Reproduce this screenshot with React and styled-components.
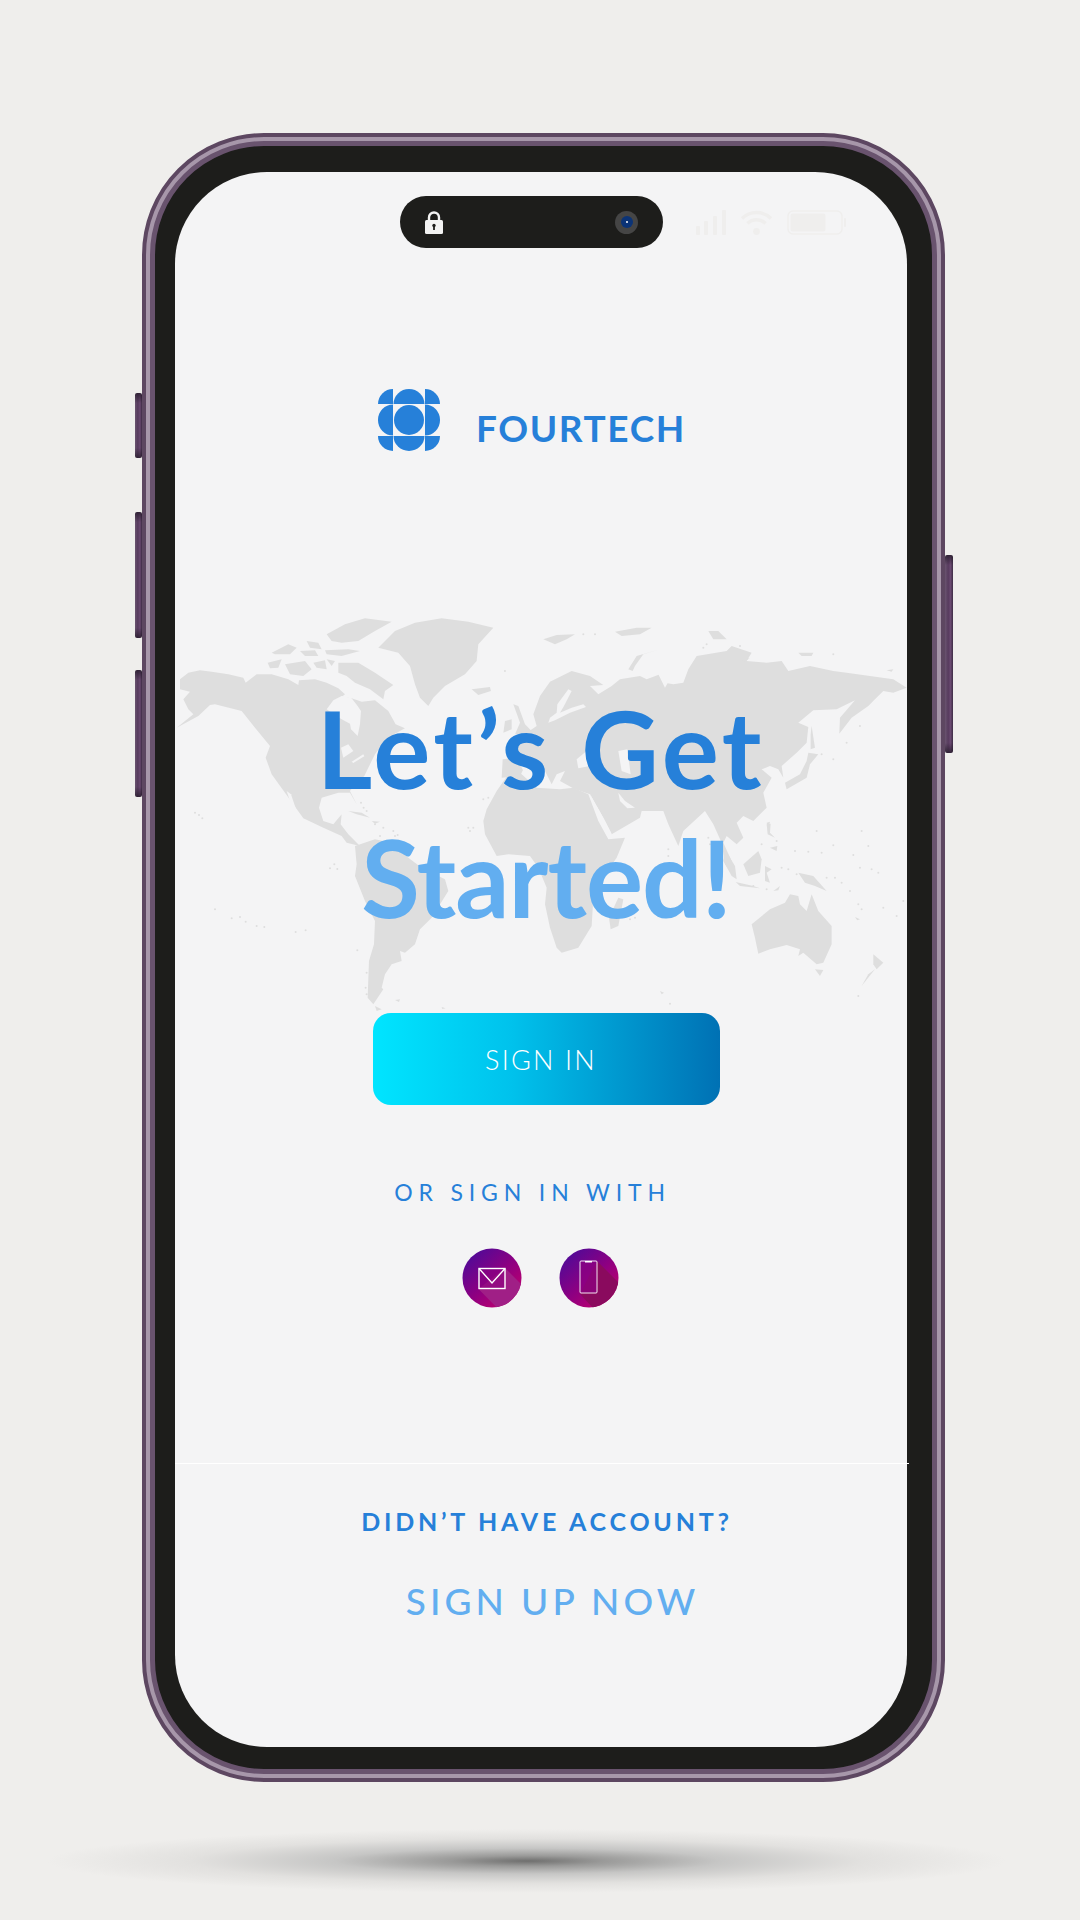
import React from "react";
import styled, { createGlobalStyle } from "styled-components";

const GlobalStyle = createGlobalStyle`
  html, body {
    margin: 0;
    padding: 0;
    width: 1080px;
    height: 1920px;
    overflow: hidden;
    background: #efeeec;
    font-family: "Lato", "Liberation Sans", sans-serif;
  }
`;

const Page = styled.div`
  width: 1080px;
  height: 1920px;
  display: flex;
  flex-direction: column;
  padding-top: 133px;
  box-sizing: border-box;
  background: #efeeec;
`;

const PhoneRow = styled.div`
  display: flex;
  padding-left: 135px;
`;

const LeftRail = styled.div`
  width: 7px;
  padding-top: 260px;
  display: flex;
  flex-direction: column;
`;

const RightRail = styled.div`
  width: 8px;
  padding-top: 422px;
`;

const SideButton = styled.div`
  width: 100%;
  height: ${(p) => p.$h}px;
  margin-bottom: ${(p) => p.$gap || 0}px;
  border-radius: 2px;
  background:
    linear-gradient(180deg, rgba(35, 25, 40, 0.75) 0, rgba(35, 25, 40, 0) 10px, rgba(35, 25, 40, 0) calc(100% - 10px), rgba(35, 25, 40, 0.75) 100%),
    linear-gradient(90deg, #6a5470 0%, #573b5e 40%, #6b4a72 70%, #3d2c44 100%);
`;

const FrameOuter = styled.div`
  width: 803px;
  height: 1649px;
  box-sizing: border-box;
  border: 4px solid #5d4761;
  border-radius: 122px;
  background: #a797aa;
  padding: 4px;
`;

const FrameInner = styled.div`
  height: 100%;
  box-sizing: border-box;
  border: 5px solid #69536e;
  border-radius: 114px;
  background: #1d1d1b;
  padding: 26px 25px 22px 20px;
`;

const Screen = styled.div`
  position: relative;
  height: 100%;
  border-radius: 92px;
  background: #f4f4f5;
  display: flex;
  flex-direction: column;
  align-items: center;
`;

const StatusBar = styled.div`
  align-self: stretch;
  margin-top: 24px;
  height: 52px;
  padding-left: 225px;
  display: flex;
  align-items: center;
`;

const Notch = styled.div`
  width: 263px;
  height: 52px;
  border-radius: 26px;
  background: #1d1d1b;
  display: flex;
  align-items: center;
  justify-content: space-between;
  padding: 0 25px 0 25px;
  box-sizing: border-box;
`;

const Camera = styled.div`
  width: 23px;
  height: 23px;
  border-radius: 50%;
  background: #454545;
  display: flex;
  align-items: center;
  justify-content: center;
`;

const Lens = styled.div`
  width: 12px;
  height: 12px;
  border-radius: 50%;
  background: #0b3376;
  display: flex;
  align-items: center;
  justify-content: center;

  &::after {
    content: "";
    width: 2px;
    height: 2px;
    border-radius: 50%;
    background: #fff;
  }
`;

const StatusIcons = styled.div`
  margin-left: 33px;
  display: flex;
  align-items: center;
  gap: 14px;
`;

const Brand = styled.div`
  margin-top: 141px;
  align-self: flex-start;
  margin-left: 203px;
  display: flex;
  align-items: center;
  gap: 36px;
`;

const BrandName = styled.div`
  padding-top: 15px;
  font-size: 37px;
  font-weight: 700;
  letter-spacing: 1.6px;
  color: #2680d9;
`;

const MapLayer = styled.svg`
  position: absolute;
  left: 0;
  top: 439px;
  width: 732px;
  height: 412px;
`;

const Title = styled.h1`
  position: relative;
  margin: 232px 0 0;
  font-size: 107px;
  font-weight: 700;
  line-height: 129px;
  text-align: center;
`;

const TitleLine = styled.div`
  color: ${(p) => p.$color};
  margin-left: ${(p) => p.$nudge || 0}px;
  letter-spacing: ${(p) => p.$spacing}px;
`;

const SignInButton = styled.button`
  position: relative;
  margin: 72px 0 0 10px;
  width: 347px;
  height: 92px;
  border: 0;
  border-radius: 18px;
  background: linear-gradient(90deg, #00e5ff 0%, #00c2ec 40%, #0071b4 100%);
  color: #fff;
  font-family: inherit;
  font-size: 27px;
  font-weight: 300;
  letter-spacing: 2.2px;
  padding: 0 10px 0 0;
`;

const OrText = styled.div`
  margin: 72px 17px 0 0;
  font-size: 23px;
  line-height: 30px;
  letter-spacing: 5.85px;
  color: #2680d9;
`;

const SocialRow = styled.div`
  margin: 41px 2px 0 0;
  display: flex;
  gap: 37px;
`;

const SocialIcon = styled.svg`
  width: 60px;
  height: 60px;
  display: block;
`;

const Divider = styled.div`
  align-self: flex-start;
  margin-top: 155px;
  width: 734px;
  height: 1px;
  background: #ffffff;
`;

const AccountText = styled.div`
  margin: 42px 0 0 12px;
  font-size: 25px;
  font-weight: 700;
  line-height: 30px;
  letter-spacing: 3.75px;
  color: #2680d9;
`;

const SignUpText = styled.div`
  margin: 43px 0 0 23px;
  font-size: 37px;
  font-weight: 500;
  line-height: 44px;
  letter-spacing: 4px;
  color: #62aef0;
`;

const FloorShadow = styled.div`
  margin: 47px 0 0 47px;
  width: 960px;
  height: 64px;
  background: radial-gradient(ellipse 50% 50% at 50% 50%, #6f6f6e 0%, #9a9a99 16%, #c6c6c5 40%, #e2e1df 70%, #efeeec 100%);
`;

const Lock = () => (
  <svg width="18" height="23" viewBox="0 0 18 23">
    <path d="M4 10V6.500a5 5 0 0 1 10 0V10" fill="none" stroke="#f2f2f2" strokeWidth="2.400" />
    <rect x="0" y="9" width="18" height="14" rx="1.500" fill="#f2f2f2" />
    <circle cx="9" cy="14.500" r="1.700" fill="#1d1d1b" />
    <rect x="8.100" y="15" width="1.800" height="4" fill="#1d1d1b" />
  </svg>
);

const Signal = () => (
  <svg width="30" height="25" viewBox="0 0 30 25" fill="#efeeed">
    <rect x="0" y="16" width="4" height="9" rx="1" />
    <rect x="8" y="11" width="4" height="14" rx="1" />
    <rect x="17" y="6" width="4" height="19" rx="1" />
    <rect x="26" y="0" width="4" height="25" rx="1" />
  </svg>
);

const Wifi = () => (
  <svg width="33" height="25" viewBox="0 0 33 25" fill="none" stroke="#efeeed" strokeWidth="3.500">
    <path d="M2 8.500C10 0.500 23 0.500 31 8.500" />
    <path d="M7.500 13.500C12.500 8.500 20.500 8.500 25.500 13.500" />
    <circle cx="16.500" cy="21.500" r="3.400" fill="#efeeed" stroke="none" />
  </svg>
);

const Battery = () => (
  <svg width="59" height="25" viewBox="0 0 59 25">
    <rect x="1" y="1" width="54" height="23" rx="5" fill="none" stroke="#efeeed" strokeWidth="1.500" />
    <rect x="3.500" y="3.500" width="35" height="18" rx="2.500" fill="#efeeed" />
    <rect x="57" y="8" width="2" height="9" rx="1" fill="#efeeed" />
  </svg>
);

const Logo = () => (
  <svg width="62" height="62" viewBox="0 0 62 62" fill="#2680d9">
    <circle cx="31" cy="31" r="15" />
    <path d="M15.500 15 A15.500 15 0 0 1 46.500 15 Z" />
    <path d="M15.500 47 A15.500 15 0 0 0 46.500 47 Z" />
    <path d="M15 15.500 A15 15.500 0 0 0 15 46.500 Z" />
    <path d="M47 15.500 A15 15.500 0 0 1 47 46.500 Z" />
    <path d="M15 15 H0 A15 15 0 0 1 15 0 Z" />
    <path d="M47 15 H62 A15 15 0 0 0 47 0 Z" />
    <path d="M15 47 H0 A15 15 0 0 0 15 62 Z" />
    <path d="M47 47 H62 A15 15 0 0 1 47 62 Z" />
  </svg>
);

const LAND = "#dedede";
const SEA = "#f4f4f5";

// americas + arctic, in crop pixels of the top left quarter (3x)
const westLand = [
  "M15,205 L40,185 L75,178 L110,182 L160,190 L205,200 L212,215 L245,190 L290,190 L340,205 L370,222 L372,208 L420,205 L455,215 L490,232 L510,250 L500,258 L530,262 L560,272 L600,268 L640,300 L662,340 L690,352 L660,368 L625,395 L600,430 L580,470 L568,495 L540,520 L525,540 L545,580 L525,545 L490,545 L440,560 L432,590 L445,630 L475,640 L500,610 L497,640 L520,670 L555,705 L515,695 L500,675 L445,650 L385,622 L330,545 L290,490 L272,440 L285,405 L240,350 L200,300 L120,280 L105,282 L70,315 L5,350 L55,310 L40,295 L25,265 L45,242 L15,235 Z",
  "M278,155 L320,145 L310,170 L285,172 Z",
  "M330,160 L390,150 L410,175 L385,195 L345,190 Z",
  "M415,155 L450,148 L455,175 L425,170 Z",
  "M490,155 L550,155 L600,185 L655,222 L630,240 L625,265 L585,235 L540,215 L515,195 L490,185 Z",
  "M455,145 L480,150 L470,165 Z",
  "M455,70 L510,40 L570,22 L650,32 L600,60 L550,90 L500,95 L470,90 Z",
  "M395,90 L430,95 L440,115 L405,110 Z",
  "M450,118 L520,115 L555,120 L500,135 L455,130 Z",
  "M290,125 L340,100 L365,110 L345,130 L300,130 Z",
  "M375,120 L420,118 L430,135 L390,135 Z",
  "M610,110 L660,60 L720,35 L800,22 L880,32 L955,50 L910,100 L905,150 L870,190 L810,225 L775,260 L760,285 L735,260 L720,220 L705,165 L670,125 Z",
  "M890,235 L945,228 L948,240 L910,252 Z",
  "M520,600 L560,605 L585,620 L545,610 Z",
  "M590,630 L615,632 L600,638 Z",
  "M540,705 L600,685 L650,695 L700,740 L740,770 L810,805 L820,840 L770,920 L735,955 L720,1000 L690,1025 L675,1020 L680,1050 L650,1060 L630,1090 L620,1130 L625,1135 L595,1180 L578,1160 L582,1050 L597,1000 L600,930 L570,870 L540,795 L545,760 Z",
  "M600,1185 L620,1195 L605,1200 Z",
  "M660,1167 L675,1165 L672,1173 Z",
  "M800,1188 L812,1192 L802,1194 Z",
];

const westSea = [
  "M455,295 L475,268 L500,255 L530,262 L548,285 L558,300 L555,340 L548,375 L528,355 L525,338 L500,325 L470,305 Z",
  "M335,540 L348,550 L365,600 L350,585 Z",
  "M498,410 L520,400 L535,420 L505,440 Z",
  "M530,452 L565,430 L568,436 L535,456 Z",
  "M215,195 L250,178 L222,205 Z",
];

const westDots = [
  [60, 605], [72, 612], [82, 622], [120, 895], [170, 922], [195, 918], [212, 932], [245, 945], [268, 948], [362, 963], [392, 958],
  [465, 772], [478, 760], [487, 774], [547, 1018], [558, 575], [566, 590], [575, 600], [600, 640], [625, 650], [655, 660], [660, 675], [668, 672],
  [615, 675], [880, 650], [895, 650], [885, 660], [990, 180], [1000, 610], [575, 1085], [572, 1130], [575, 1150], [925, 565], [940, 560],
];

// eurasia + africa + oceania, in crop pixels of the top right quarter (3x)
const eastLand = [
  "M-115,500 L-112,445 L-65,440 L-75,405 L-40,365 L-10,345 L-20,310 L0,255 L30,212 L95,180 L150,195 L190,222 L150,225 L175,250 L215,225 L240,205 L300,195 L320,205 L360,190 L375,215 L400,220 L430,215 L445,175 L470,135 L560,120 L575,105 L635,125 L620,150 L680,155 L725,150 L745,180 L810,165 L880,180 L920,185 L990,195 L1060,205 L1100,230 L1060,245 L1030,240 L1005,265 L985,285 L935,320 L898,368 L900,320 L945,268 L890,295 L820,298 L775,335 L805,348 L800,395 L770,425 L725,465 L730,500 L715,475 L690,465 L665,475 L695,500 L670,545 L680,590 L640,630 L610,615 L590,635 L610,680 L590,700 L560,675 L550,695 L575,750 L585,800 L555,760 L545,695 L520,640 L495,600 L430,660 L415,705 L385,640 L370,600 L305,600 L300,620 L215,670 L190,620 L150,550 L105,535 L60,510 L75,480 L50,490 L35,520 L10,470 L-40,455 L-60,495 Z",
  "M-80,280 L-65,285 L-45,340 L-20,365 L-75,370 L-60,335 Z",
  "M-105,330 L-85,325 L-85,355 L-110,365 Z",
  "M10,85 L50,72 L105,70 L80,85 L45,100 Z",
  "M225,62 L290,50 L335,50 L300,70 L245,75 Z",
  "M505,60 L535,60 L560,85 L520,85 Z",
  "M775,125 L820,125 L815,135 L785,135 Z",
  "M590,155 L630,140 L615,152 Z",
  "M265,175 L290,135 L360,115 L310,130 L285,165 L278,180 Z",
  "M815,345 L825,410 L812,415 L812,370 Z",
  "M805,425 L835,430 L810,460 L800,500 L740,535 L735,515 L780,490 L800,450 Z",
  "M1040,178 L1060,175 L1055,182 Z",
  "M680,635 L690,632 L685,655 Z",
  // africa and islands below, y shifted by 570 from the lower crop
  "M-170,630 L-160,595 L-130,540 L-95,490 L-60,485 L-10,530 L60,535 L100,530 L145,550 L175,630 L205,685 L255,680 L230,740 L195,790 L160,860 L155,945 L115,1010 L65,1025 L50,1010 L30,950 L15,880 L20,830 L-5,770 L-30,735 L-95,730 L-130,735 L-165,670 Z",
  "M235,860 L250,865 L235,945 L212,955 L207,920 Z",
  "M555,715 L585,765 L590,805 L575,795 L550,750 Z",
  "M610,760 L655,720 L665,745 L660,785 L625,795 Z",
  "M587,813 L640,825 L660,832 L600,825 Z",
  "M675,765 L695,775 L680,785 L690,815 L675,810 Z",
  "M775,785 L820,795 L860,840 L825,825 L795,815 Z",
  "M680,640 L692,638 L690,665 L705,680 L683,670 Z",
  "M690,710 L712,705 L710,720 Z",
  "M700,840 L720,825 L715,838 Z",
  "M635,940 L690,895 L735,875 L750,850 L775,855 L780,880 L800,900 L815,850 L835,900 L875,945 L875,1000 L850,1055 L830,1060 L790,1025 L775,1035 L780,1015 L740,1002 L690,1015 L655,1028 L645,980 Z",
  "M825,1075 L850,1077 L840,1095 Z",
  "M1000,1030 L1030,1055 L1010,1075 L1000,1060 Z",
  "M1005,1075 L965,1125 L985,1090 Z",
  "M945,918 L960,925 L952,928 Z",
  "M360,1140 L372,1145 L365,1150 Z",
];

const eastSea = [
  "M52,280 L85,235 L95,240 L72,285 L60,305 L95,290 L130,280 L138,288 L90,305 L45,328 L25,335 L30,320 L50,305 Z",
  "M110,445 L150,412 L160,430 L150,465 L115,472 Z",
  "M235,420 L262,415 L272,490 L245,480 Z",
  "M235,545 L255,570 L285,590 L262,592 L240,570 Z",
  "M150,550 L175,610 L205,670 L215,668 L190,620 Z",
  "M355,190 L385,160 L395,205 L425,215 L395,195 L375,230 Z",
  "M-60,460 L-30,460 L-15,480 L-45,490 Z",
];

const eastDots = [
  [130, 70], [165, 70], [500, 100], [490, 110], [600, 105], [385, 715], [385, 735], [385, 765], [505, 680], [510, 700], [665, 700], [710, 690], [830, 660], [965, 660],
  [985, 705], [765, 720], [805, 722], [845, 725], [880, 703], [940, 732], [960, 770], [995, 775], [1015, 785], [725, 770], [745, 775], [770, 790], [885, 800], [905, 815], [930, 840],
  [955, 880], [965, 895], [1030, 890], [1070, 915], [1090, 870], [955, 1155], [390, 1178], [285, 920], [270, 925], [860, 800], [640, 825], [680, 835], [880, 130], [800, 130], [960, 345], [920, 395], [880, 445], [845, 430],
];

const WorldMap = () => (
  <MapLayer viewBox="175 610 732 412">
    <g transform="translate(175 610) scale(0.3333)">
      {westLand.map((d) => (
        <path key={d} d={d} fill={LAND} />
      ))}
      {westSea.map((d) => (
        <path key={d} d={d} fill={SEA} />
      ))}
      {westDots.map(([x, y]) => (
        <circle key={`${x}-${y}`} cx={x} cy={y} r="3" fill={LAND} />
      ))}
    </g>
    <g transform="translate(540 610) scale(0.3333)">
      {eastLand.map((d) => (
        <path key={d} d={d} fill={LAND} />
      ))}
      {eastSea.map((d) => (
        <path key={d} d={d} fill={SEA} />
      ))}
      {eastDots.map(([x, y]) => (
        <circle key={`${x}-${y}`} cx={x} cy={y} r="3" fill={LAND} />
      ))}
    </g>
  </MapLayer>
);

const MailIcon = () => (
  <SocialIcon viewBox="0 0 60 60">
    <defs>
      <linearGradient id="mailBg" x1="0.1" y1="0.1" x2="0.85" y2="0.95">
        <stop offset="0" stopColor="#4f0a98" />
        <stop offset="0.5" stopColor="#8b0082" />
        <stop offset="1" stopColor="#c4006c" />
      </linearGradient>
      <clipPath id="mailClip">
        <circle cx="30" cy="30" r="29.500" />
      </clipPath>
    </defs>
    <circle cx="30" cy="30" r="29.500" fill="url(#mailBg)" />
    <path d="M16.500 41 L43 20 L70 47 L45 70 Z" fill="#a01f86" clipPath="url(#mailClip)" />
    <rect x="17" y="20.500" width="26" height="20" fill="#8a0081" opacity="0.6" />
    <rect x="17" y="20.500" width="26" height="20" fill="none" stroke="#fff" strokeWidth="1.400" />
    <path d="M17 20.500 L30 35 L43 20.500" fill="none" stroke="#fff" strokeWidth="1.400" />
  </SocialIcon>
);

const PhoneIcon = () => (
  <SocialIcon viewBox="0 0 60 60">
    <defs>
      <linearGradient id="phoneBg" x1="0.1" y1="0.1" x2="0.85" y2="0.95">
        <stop offset="0" stopColor="#4f0a98" />
        <stop offset="0.5" stopColor="#8b0082" />
        <stop offset="1" stopColor="#c4006c" />
      </linearGradient>
      <clipPath id="phoneClip">
        <circle cx="30" cy="30" r="29.500" />
      </clipPath>
    </defs>
    <circle cx="30" cy="30" r="29.500" fill="url(#phoneBg)" />
    <path d="M21 46 L38 13 L70 45 L45 72 Z" fill="#8a0a5e" clipPath="url(#phoneClip)" />
    <rect x="21" y="13" width="17" height="32" rx="1" fill="#8b0082" opacity="0.7" />
    <rect x="21" y="13" width="17" height="32" rx="1" fill="none" stroke="#fff" strokeWidth="0.900" />
    <rect x="26" y="13" width="7" height="1.500" fill="#fff" />
  </SocialIcon>
);

export default function App() {
  return (
    <>
      <GlobalStyle />
      <Page>
        <PhoneRow>
          <LeftRail>
            <SideButton $h={65} $gap={54} />
            <SideButton $h={126} $gap={32} />
            <SideButton $h={127} />
          </LeftRail>
          <FrameOuter>
            <FrameInner>
              <Screen>
                <WorldMap />
                <StatusBar>
                  <Notch>
                    <Lock />
                    <Camera>
                      <Lens />
                    </Camera>
                  </Notch>
                  <StatusIcons>
                    <Signal />
                    <Wifi />
                    <Battery />
                  </StatusIcons>
                </StatusBar>
                <Brand>
                  <Logo />
                  <BrandName>FOURTECH</BrandName>
                </Brand>
                <Title>
                  <TitleLine $color="#2680d9" $spacing={3.5}>Let’s Get</TitleLine>
                  <TitleLine $color="#62aef0" $nudge={10} $spacing={-1}>Started!</TitleLine>
                </Title>
                <SignInButton>SIGN IN</SignInButton>
                <OrText>OR SIGN IN WITH</OrText>
                <SocialRow>
                  <MailIcon />
                  <PhoneIcon />
                </SocialRow>
                <Divider />
                <AccountText>DIDN’T HAVE ACCOUNT?</AccountText>
                <SignUpText>SIGN UP NOW</SignUpText>
              </Screen>
            </FrameInner>
          </FrameOuter>
          <RightRail>
            <SideButton $h={198} />
          </RightRail>
        </PhoneRow>
        <FloorShadow />
      </Page>
    </>
  );
}
